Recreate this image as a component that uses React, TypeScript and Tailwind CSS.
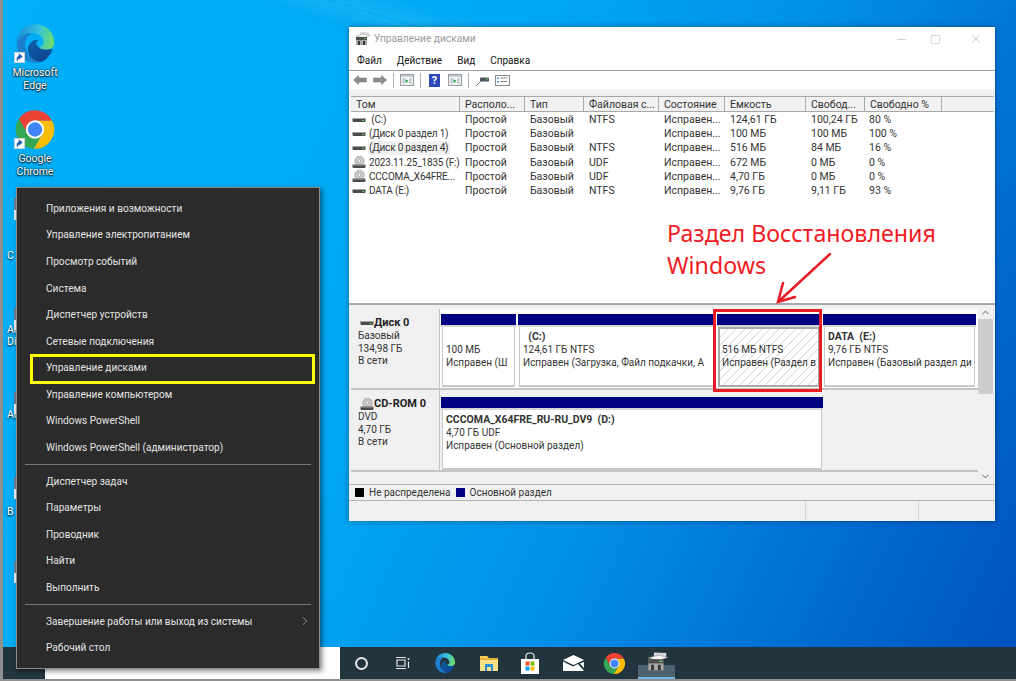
import { useId } from 'react';
import { ChevronRight, ChevronUp, ChevronDown, Minus, Square, X } from 'lucide-react';

const menuGroups = [
  ['Приложения и возможности', 'Управление электропитанием', 'Просмотр событий', 'Система', 'Диспетчер устройств', 'Сетевые подключения', 'Управление дисками', 'Управление компьютером', 'Windows PowerShell', 'Windows PowerShell (администратор)'],
  ['Диспетчер задач', 'Параметры', 'Проводник', 'Найти', 'Выполнить'],
  ['Завершение работы или выход из системы', 'Рабочий стол'],
];

const columns = [
  { title: 'Том', width: 'w-[109px]' },
  { title: 'Располо...', width: 'w-[65px]' },
  { title: 'Тип', width: 'w-[59px]' },
  { title: 'Файловая с...', width: 'w-[75px]' },
  { title: 'Состояние', width: 'w-[66px]' },
  { title: 'Емкость', width: 'w-[81px]' },
  { title: 'Свобод...', width: 'w-[59px]' },
  { title: 'Свободно %', width: 'w-[77px]' },
];

const volumes = [
  { icon: 'disk', name: '\u00a0(C:)', fs: 'NTFS', size: '124,61 ГБ', free: '100,24 ГБ', pct: '80 %' },
  { icon: 'disk', name: '(Диск 0 раздел 1)', fs: '', size: '100 МБ', free: '100 МБ', pct: '100 %' },
  { icon: 'disk', name: '(Диск 0 раздел 4)', fs: 'NTFS', size: '516 МБ', free: '84 МБ', pct: '16 %', selected: true },
  { icon: 'cd', name: '2023.11.25_1835 (F:)', fs: 'UDF', size: '672 МБ', free: '0 МБ', pct: '0 %' },
  { icon: 'cd', name: 'CCCOMA_X64FRE...', fs: 'UDF', size: '4,70 ГБ', free: '0 МБ', pct: '0 %' },
  { icon: 'disk', name: 'DATA (E:)', fs: 'NTFS', size: '9,76 ГБ', free: '9,11 ГБ', pct: '93 %' },
];

function EdgeLogo({ size }: { size: number }) {
  const id = useId();
  return (
    <svg width={size} height={size} viewBox="0 0 48 48">
      <defs>
        <linearGradient id={id + 'a'} x1="0.05" y1="0.4" x2="1" y2="0.55">
          <stop offset="0" stopColor="#1f8fd8" />
          <stop offset="0.5" stopColor="#35c1e1" />
          <stop offset="1" stopColor="#6fdc6a" />
        </linearGradient>
        <linearGradient id={id + 'b'} x1="0" y1="0" x2="1" y2="1">
          <stop offset="0" stopColor="#0d5fa8" />
          <stop offset="1" stopColor="#0f3f8c" />
        </linearGradient>
      </defs>
      <path d="M3 24C3 11 13 2 25 2C37 2 46 12 46 23C46 28 42 31 36 31C32 31 29 30 28.5 28C33 27 35 24 33 19C31 14 26 12 21 12C12 12 5 17 3 24Z" fill={`url(#${id}a)`} />
      <path d="M3 24C5 17 12 12 21 12C15 15 12 21 13 27C14 35 20 43 30 45C27 46 25.5 46 24 46C12 46 3 36 3 24Z" fill="#1b7fcc" />
      <path d="M28.5 28C29 30 32 31 36 31C39 31 42 30 44 31C41 39 34 45 30 45C21 44 15 36 16 29C17 23 23 19 28 20C24 22 25 27 28.5 28Z" fill={`url(#${id}b)`} />
    </svg>
  );
}

function ChromeLogo({ size }: { size: number }) {
  return (
    <svg width={size} height={size} viewBox="0 0 48 48">
      <path d="M5.54 12A22 22 0 0 1 43.6 14H24A10 10 0 0 0 15.34 29Z" fill="#ea4335" />
      <path d="M5.54 12A22 22 0 0 0 22.86 46L32.66 29A10 10 0 0 1 15.34 29Z" fill="#34a853" />
      <path d="M43.6 14A22 22 0 0 1 22.86 46L32.66 29A10 10 0 0 0 24 14Z" fill="#fbbc04" />
      <circle cx="24" cy="24" r="10.5" fill="#fff" />
      <circle cx="24" cy="24" r="8.2" fill="#4285f4" />
    </svg>
  );
}

function ShortcutBadge() {
  return (
    <div className="absolute left-0 bottom-0 w-[11px] h-[11px] bg-white border border-[#c8d0d8]">
      <svg viewBox="0 0 10 10" className="w-full h-full">
        <path d="M2.5 8.5V6Q2.5 3.8 5 3.8H6M4.8 1.5L7.6 3.8L4.8 6.2Z" fill="#1c5fb0" stroke="#1c5fb0" strokeWidth="1.2" />
      </svg>
    </div>
  );
}

function DesktopIcon({ label, top, children }: { label: string[]; top: string; children: React.ReactNode }) {
  return (
    <div className={`absolute left-[5px] w-[60px] flex flex-col items-center ${top}`}>
      <div className="relative w-[42px] h-[40px] flex items-center justify-center">
        {children}
        <ShortcutBadge />
      </div>
      <div className="mt-[3px] text-center text-white text-[10.5px] leading-[13px] font-['Roboto',sans-serif] [text-shadow:0_1px_2px_#000,0_0_2px_#000]">
        {label.map((l) => (
          <div key={l}>{l}</div>
        ))}
      </div>
    </div>
  );
}

function DiskIcon() {
  return (
    <svg width="14" height="10" viewBox="0 0 14 10" className="shrink-0">
      <rect x="0.5" y="3" width="13" height="4" rx="1" fill="#4b4b4b" />
      <rect x="0.5" y="3" width="13" height="1" fill="#a5a5a5" />
      <rect x="10" y="5" width="2" height="1" fill="#5fd35f" />
    </svg>
  );
}

function CdIcon() {
  return (
    <svg width="14" height="13" viewBox="0 0 14 13" className="shrink-0">
      <circle cx="7.5" cy="5" r="4.7" fill="#c9c9c9" stroke="#8f8f8f" strokeWidth="0.6" />
      <circle cx="7.5" cy="5" r="1.3" fill="#fff" stroke="#8f8f8f" strokeWidth="0.5" />
      <rect x="0.5" y="8.5" width="13" height="3.5" rx="1" fill="#4b4b4b" />
      <rect x="0.5" y="8.5" width="13" height="1" fill="#a5a5a5" />
    </svg>
  );
}

function MmcIcon({ size }: { size: number }) {
  return (
    <svg width={size} height={size} viewBox="0 0 16 16">
      <path d="M5 1L14 1.500V5L5 7Z" fill="#d8d8d8" />
      <path d="M1 5L8 3L15 4.500L8 7Z" fill="#f4f4f4" stroke="#8a8a8a" strokeWidth="0.4" />
      <path d="M1 6H12V14H1Z" fill="#a8a8a8" />
      <rect x="1" y="6" width="11" height="3" fill="#4d4d4d" />
      <rect x="9" y="7" width="2" height="1" fill="#66d866" />
      <rect x="3" y="10" width="2" height="4" fill="#333" />
      <rect x="8" y="10" width="2" height="4" fill="#333" />
    </svg>
  );
}

function ArrowButton({ flip }: { flip?: boolean }) {
  return (
    <svg width="14" height="10" viewBox="0 0 14 10" className={flip ? 'scale-x-[-1]' : ''}>
      <path d="M0.500 5L5.500 0.500V3H13.500V7H5.500V9.500Z" fill="#8c8c8c" stroke="#6f6f6f" strokeWidth="0.5" />
    </svg>
  );
}

function PaneIcon({ color }: { color: string }) {
  return (
    <svg width="14" height="12" viewBox="0 0 14 12">
      <rect x="0.500" y="0.500" width="13" height="11" fill="#f6f6f6" stroke="#9a9a9a" />
      <rect x="1" y="1" width="12" height="2" fill="#c3cdd6" />
      <rect x="2" y="4" width="3" height="6" fill="#c9d4dc" />
      <rect x="9" y="4" width="3" height="6" fill="#c9d4dc" />
      <path d="M5.500 5L8.500 7L5.500 9Z" fill={color} />
    </svg>
  );
}

function Toolbar() {
  return (
    <div className="flex items-center h-[19px] pl-[4px] border-t border-[#a0a0a0] bg-white">
      <ArrowButton />
      <div className="ml-[6px]"><ArrowButton flip /></div>
      <div className="w-px h-[15px] bg-[#b4b4b4] ml-[6px] mr-[6px]" />
      <PaneIcon color="#2f9e44" />
      <div className="w-px h-[15px] bg-[#b4b4b4] ml-[6px] mr-[8px]" />
      <div className="w-[11px] h-[13px] bg-[#2d49b8] text-white text-[11px] font-bold leading-[13px] text-center">?</div>
      <div className="ml-[8px]"><PaneIcon color="#2f9e44" /></div>
      <div className="w-px h-[15px] bg-[#b4b4b4] ml-[6px] mr-[6px]" />
      <svg width="15" height="13" viewBox="0 0 15 13">
        <path d="M1 12L6 7" stroke="#6f7f8f" strokeWidth="1" />
        <rect x="5" y="3.500" width="9" height="4" rx="1" fill="#4c5760" />
        <rect x="11" y="4.500" width="2" height="1" fill="#6bd06b" />
      </svg>
      <svg width="15" height="11" viewBox="0 0 15 11" className="ml-[5px]">
        <rect x="0.500" y="0.500" width="14" height="10" fill="#fff" stroke="#8a8a8a" />
        <rect x="2" y="2.500" width="2" height="1.500" fill="#4f8fd0" />
        <rect x="2" y="6" width="2" height="1.500" fill="#4f8fd0" />
        <rect x="5.500" y="2.500" width="7" height="1" fill="#888" />
        <rect x="5.500" y="6" width="7" height="1" fill="#888" />
      </svg>
    </div>
  );
}

function VolumeTable() {
  return (
    <div className="h-[207px] ml-[2px] mr-px bg-white overflow-hidden">
      <div className="flex h-[16px] bg-[#f1f1f1] border-y border-[#a8a8a8] leading-[15px]">
        {columns.map((c) => (
          <div key={c.title} className={`${c.width} shrink-0 pl-[5px] border-r border-[#a8a8a8] text-[#333] whitespace-nowrap overflow-hidden`}>
            {c.title}
          </div>
        ))}
      </div>
      <div className="pt-px">
        {volumes.map((v) => (
          <div key={v.name} className="flex h-[14.2px] items-center leading-[14px] text-[#333] whitespace-nowrap">
            <div className="w-[109px] shrink-0 flex items-center pl-px gap-[2px]">
              {v.icon === 'disk' ? <DiskIcon /> : <CdIcon />}
              <span className={`text-[10px] tracking-[-0.2px] ${v.selected ? 'bg-[#f0f0f0] pl-px pr-[2px]' : 'pl-px'}`}>{v.name}</span>
            </div>
            <div className="w-[65px] shrink-0 pl-[5px]">Простой</div>
            <div className="w-[59px] shrink-0 pl-[5px]">Базовый</div>
            <div className="w-[75px] shrink-0 pl-[5px]">{v.fs}</div>
            <div className="w-[66px] shrink-0 pl-[5px]">Исправен...</div>
            <div className="w-[81px] shrink-0 pl-[5px]">{v.size}</div>
            <div className="w-[59px] shrink-0 pl-[5px]">{v.free}</div>
            <div className="w-[77px] shrink-0 pl-[4px]">{v.pct}</div>
          </div>
        ))}
      </div>
    </div>
  );
}

function Partition({ width, title, lines, hatched, mr }: { width: string; title?: string; lines: string[]; hatched?: boolean; mr?: string }) {
  return (
    <div className={`${width} ${mr ?? ''} shrink-0 flex flex-col`}>
      <div className="h-[11px] bg-[#000080]" />
      <div className="h-[2px] bg-[#d6d6d6]" />
      <div
        className={
          hatched
            ? 'h-[60px] mx-[1px] border-[2px] border-[#a9a9a9] pl-[2px] pt-[2px] text-[10px] leading-[12.8px] overflow-hidden whitespace-nowrap text-[#333] bg-[repeating-linear-gradient(135deg,#fff_0,#fff_5.2px,#d2d2d2_5.2px,#d2d2d2_6px)]'
            : 'h-[60px] mx-[1px] border-x border-b-[2px] border-[#c8c8c8] bg-white pl-[3px] pt-[4px] text-[10px] leading-[12.8px] overflow-hidden whitespace-nowrap text-[#333]'
        }
      >
        <div className="font-bold h-[13px] text-[10.5px]">{title}</div>
        {lines.map((l) => (
          <div key={l}>{l}</div>
        ))}
      </div>
    </div>
  );
}

function DiskLabel({ name, icon, lines }: { name: string; icon: React.ReactNode; lines: string[] }) {
  return (
    <div className="w-[89px] shrink-0 bg-[#f0f0f0] border-r border-[#c4c4c4] pl-[7px] pt-[7px] text-[10px] leading-[12.7px] text-[#333]">
      <div className="flex items-center pl-[2px] h-[14px] font-bold text-[11px] text-[#222]">
        {icon}
        <span>{name}</span>
      </div>
      {lines.map((l) => (
        <div key={l}>{l}</div>
      ))}
    </div>
  );
}

function DiskArea() {
  return (
    <div className="flex h-[181px] bg-[#f0f0f0] border-t-[2px] border-[#a8a8a8] pl-[2px]">
      <div className="w-[627px] shrink-0 pt-[4px]">
        <div className="flex h-[81px] border-b-[2px] border-[#c4c4c4]">
          <DiskLabel name="Диск 0" icon={<DiskIcon />} lines={['Базовый', '134,98 ГБ', 'В сети']} />
          <div className="flex bg-white pt-[5px] pl-[1px] w-[538px]">
            <Partition width="w-[75px]" mr="mr-[2px]" lines={['100 МБ', 'Исправен (Ш']} />
            <Partition width="w-[197px]" mr="mr-[2px]" title={'\u00a0\u00a0(C:)'} lines={['124,61 ГБ NTFS', 'Исправен (Загрузка, Файл подкачки, А']} />
            <Partition width="w-[104px]" mr="mr-[2px]" hatched lines={['516 МБ NTFS', 'Исправен (Раздел в']} />
            <Partition width="w-[153px]" title={'DATA\u00a0\u00a0(E:)'} lines={['9,76 ГБ NTFS', 'Исправен (Базовый раздел ди']} />
          </div>
        </div>
        <div className="flex h-[82px] border-b-[2px] border-[#c4c4c4]">
          <DiskLabel name="CD-ROM 0" icon={<CdIcon />} lines={['DVD', '4,70 ГБ', 'В сети']} />
          <div className="pt-[7px] pl-[1px]">
            <Partition width="w-[382px]" title={'CCCOMA_X64FRE_RU-RU_DV9\u00a0\u00a0(D:)'} lines={['4,70 ГБ UDF', 'Исправен (Основной раздел)']} />
          </div>
        </div>
      </div>
      <div className="w-[15px] shrink-0 bg-[#f0f0f0] flex flex-col items-center pt-[2px]">
        <ChevronUp size={11} className="text-[#555] mb-[1px]" />
        <div className="w-full h-[75px] bg-[#cdcdcd]" />
        <div className="flex-1" />
        <ChevronDown size={11} className="text-[#555] mb-[2px]" />
      </div>
    </div>
  );
}

function DiskWindow() {
  return (
    <div className="absolute left-[349px] top-[27px] w-[646px] h-[494px] flex flex-col bg-white shadow-[0_0_6px_rgba(0,0,0,0.4)] text-[10.5px] font-['Roboto',sans-serif]">
      <div className="flex items-center h-[23px] shrink-0 pl-[6px] pt-[1px]">
        <MmcIcon size={16} />
        <span className="ml-[3px] text-[#9b9b9b] text-[10.2px]">Управление дисками</span>
        <div className="ml-auto flex items-center text-[#a6a6a6]">
          <Minus size={13} strokeWidth={1} />
          <Square size={11} strokeWidth={1} className="ml-[22px]" />
          <X size={14} strokeWidth={1} className="ml-[28px] mr-[12px]" />
        </div>
      </div>
      <div className="flex items-center h-[20px] shrink-0 pl-[8px] pt-[1px] gap-[15px] text-[#111] text-[10px]">
        <span>Файл</span>
        <span>Действие</span>
        <span>Вид</span>
        <span>Справка</span>
      </div>
      <Toolbar />
      <div className="h-[7px] shrink-0 bg-[#f0f0f0]" />
      <VolumeTable />
      <DiskArea />
      <div className="flex items-center h-[17px] shrink-0 bg-[#f0f0f0] border-y border-[#b4b4b4] pl-[6px] text-[#333] text-[10px]">
        <div className="w-[9px] h-[9px] bg-black" />
        <span className="ml-[5px]">Не распределена</span>
        <div className="w-[9px] h-[9px] bg-[#000080] ml-[5px]" />
        <span className="ml-[5px]">Основной раздел</span>
      </div>
      <div className="flex flex-1 bg-[#f0f0f0]">
        <div className="w-[457px] border-r border-[#d4d4d4]" />
        <div className="w-[113px] border-r border-[#d4d4d4]" />
      </div>
    </div>
  );
}

function ContextMenu() {
  return (
    <div className="absolute left-[16px] top-[187px] w-[304px] h-[482px] pt-[7px] bg-[#2b2b2b] border border-[#8c8c8c] shadow-[2px_2px_5px_rgba(0,0,0,0.5)] text-[#e4e4e4] text-[10.1px] font-['Roboto',sans-serif]">
      {menuGroups.map((group, i) => (
        <div key={i}>
          {i > 0 && <div className="h-px bg-[#7a7a7a] mx-[8px] my-[3px]" />}
          {group.map((item) => (
            <div key={item} className="relative h-[26.6px] flex items-center pl-[29px]">
              {item}
              {item.startsWith('Завершение') && (
                <ChevronRight size={14} strokeWidth={1} className="absolute right-[7px] text-[#d8d8d8]" />
              )}
            </div>
          ))}
        </div>
      ))}
    </div>
  );
}

function Taskbar() {
  return (
    <div className="absolute left-[3px] right-0 top-[647px] h-[32px] flex bg-[#22353f]">
      <div className="w-[42px]" />
      <div className="w-[295px] bg-white" />
      <div className="w-[676px] relative flex items-center">
        <div className="w-[13px] h-[13px] ml-[15px] rounded-full border-2 border-[#e8e8e8]" />
        <svg width="16" height="16" viewBox="0 0 16 16" className="ml-[26px]">
          <path d="M2 2.500H12M2 13.500H12M3 5H11V11H3Z" fill="none" stroke="#e6e6e6" strokeWidth="1.200" />
          <circle cx="14.500" cy="4" r="1" fill="#e6e6e6" />
          <path d="M14.500 6.500V13" stroke="#e6e6e6" strokeWidth="1.200" />
        </svg>
        <div className="ml-[24px]"><EdgeLogo size={22} /></div>
        <svg width="20" height="18" viewBox="0 0 20 18" className="ml-[23px]">
          <path d="M1 2H8L10 4H19V17H1Z" fill="#f8d05a" />
          <path d="M1 5H19V17H1Z" fill="#fbe08a" />
          <rect x="1" y="4" width="18" height="2" fill="#e8b33c" />
          <path d="M6 10H14V17H12V13H8V17H6Z" fill="#2d8fd8" />
        </svg>
        <svg width="20" height="23" viewBox="0 0 20 23" className="ml-[21px]">
          <path d="M1 7H19V22H1Z" fill="#fff" />
          <path d="M6 7V4Q6 1 10 1Q14 1 14 4V7" fill="none" stroke="#e8e8e8" strokeWidth="1.200" />
          <rect x="5.500" y="9.500" width="4" height="4" fill="#f25022" />
          <rect x="10.500" y="9.500" width="4" height="4" fill="#7fba00" />
          <rect x="5.500" y="14.500" width="4" height="4" fill="#00a4ef" />
          <rect x="10.500" y="14.500" width="4" height="4" fill="#ffb900" />
        </svg>
        <svg width="21" height="16" viewBox="0 0 21 16" className="ml-[23px]">
          <path d="M0 5L10.500 0L21 5L10.500 10Z" fill="#fff" />
          <path d="M0 6.500L10 11.500L15 9L21 16H0ZM21 7V13L17 8.500Z" fill="#fff" />
        </svg>
        <div className="ml-[19px]"><ChromeLogo size={23} /></div>
        <div className="absolute left-[298px] top-[18px] w-[37px] h-[14px] bg-[#4d626e] border-b-2 border-[#76b9ed]" />
        <div className="relative ml-[21px] -mt-[2px]"><MmcIcon size={22} /></div>
      </div>
    </div>
  );
}

// bits of the desktop icons that stick out left of the context menu
function HiddenIcons() {
  const labels = [
    { text: 'C', top: 'top-[249px]' },
    { text: 'Ad', top: 'top-[323px]' },
    { text: 'Di', top: 'top-[335px]' },
    { text: 'Ad', top: 'top-[408px]' },
    { text: 'B', top: 'top-[505px]' },
  ];
  const slivers = ['top-[198px]', 'top-[308px]', 'top-[392px]', 'top-[477px]', 'top-[561px]'];
  return (
    <>
      {labels.map((l) => (
        <div key={l.top} className={`absolute left-[7px] ${l.top} text-white text-[10.5px] leading-[13px] font-['Roboto',sans-serif] [text-shadow:0_1px_2px_#000]`}>
          {l.text}
        </div>
      ))}
      {slivers.map((t) => (
        <div key={t} className={`absolute left-[14px] w-[2px] h-[22px] ${t} bg-[linear-gradient(#6d7f92_55%,#f2f2f2_55%)]`} />
      ))}
    </>
  );
}

export default function App() {
  return (
    <div className="relative w-[1016px] h-[681px] overflow-hidden bg-[linear-gradient(115deg,#00b0f8_0%,#00a8f4_40%,#0090e8_62%,#0068d0_85%,#0050be_100%)] font-['Roboto',sans-serif]">
      <div className="absolute left-[200px] -top-[40px] w-[500px] h-[1px] rotate-[17deg] origin-left shadow-[0_0_20px_8px_rgba(255,255,255,0.12)]" />

      <DesktopIcon label={['Microsoft', 'Edge']} top="top-[23px]">
        <EdgeLogo size={43} />
      </DesktopIcon>
      <DesktopIcon label={['Google', 'Chrome']} top="top-[109px]">
        <ChromeLogo size={43} />
      </DesktopIcon>
      <HiddenIcons />

      <Taskbar />
      <DiskWindow />
      <ContextMenu />

      {/* annotations drawn on top of the screenshot */}
      <div className="absolute left-[30px] top-[354px] w-[285px] h-[30px] border-[3px] border-[#ffff00]" />
      <div className="absolute left-[713px] top-[309px] w-[109px] h-[83px] border-[3px] border-[#e81c24]" />
      <div className="absolute left-[667px] top-[217px] text-[#f01c24] text-[23.2px] leading-[32px] font-['Noto_Sans',sans-serif]">
        <div>Раздел Восстановления</div>
        <div>Windows</div>
      </div>
      <svg className="absolute left-[770px] top-[245px]" width="70" height="65" viewBox="0 0 70 65">
        <path d="M60 9L8 57M13 38L8 57L25 52" fill="none" stroke="#e81c24" strokeWidth="2.500" strokeLinecap="round" />
      </svg>

      <div className="absolute left-0 top-0 w-[3px] h-full bg-[#8f8f8f]" />
      <div className="absolute left-0 top-[679px] w-full h-[2px] bg-[#8f8f8f]" />
    </div>
  );
}
